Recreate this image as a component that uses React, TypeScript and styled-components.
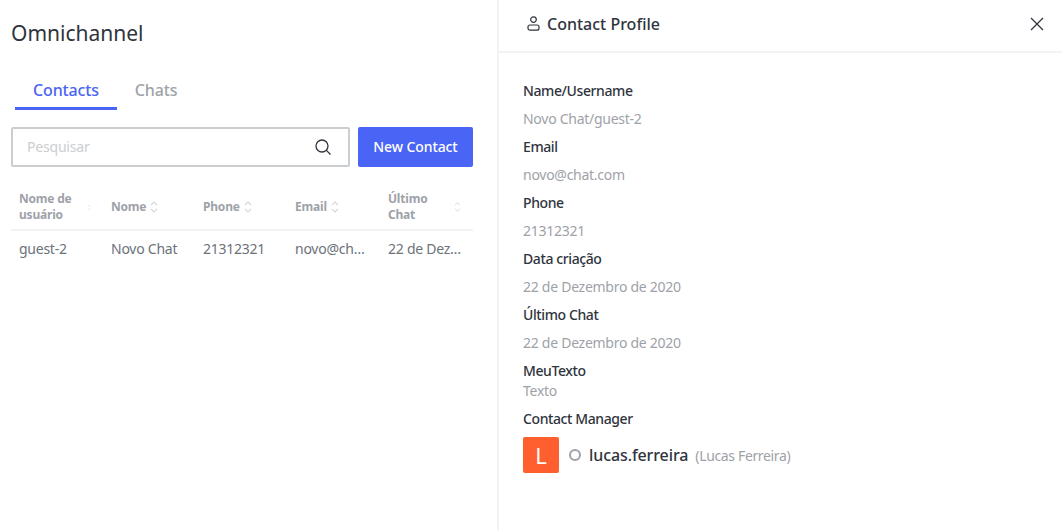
import React from "react";
import styled, { createGlobalStyle } from "styled-components";

const Global = createGlobalStyle`
  html, body { margin: 0; padding: 0; background: #fff; }
  body { font-family: "Noto Sans", "Open Sans", sans-serif; color: #2f343d; }
  * { box-sizing: border-box; }
`;

const Page = styled.div`
  display: flex;
  width: 1062px;
  height: 530px;
  overflow: hidden;
`;
const Left = styled.div`
  width: 497px;
  flex-shrink: 0;
  padding: 0 24px 0 11px;
`;
const Title = styled.h1`
  margin: 0;
  padding-top: 18px;
  height: 71px;
  font-size: 21px;
  line-height: 30px;
  font-weight: 400;
  color: #2f343d;
`;
const Tabs = styled.div`
  display: flex;
  padding-left: 4px;
  height: 39px;
`;
const Tab = styled.div<{ $active?: boolean }>`
  padding: 0 18px;
  height: 39px;
  line-height: 38px;
  font-size: 16px;
  letter-spacing: -0.15px;
  font-weight: 500;
  color: ${(p) => (p.$active ? "#4a64f5" : "#9ea2a8")};
  border-bottom: 3px solid ${(p) => (p.$active ? "#4a64f5" : "transparent")};
`;
const SearchRow = styled.div`
  display: flex;
  gap: 8px;
  margin-top: 17px;
`;
const SearchBox = styled.div`
  flex: 1;
  height: 40px;
  display: flex;
  align-items: center;
  justify-content: space-between;
  padding: 0 17px 0 14px;
  border: 2px solid #cbced1;
  border-radius: 2px;
`;
const SearchInput = styled.input`
  border: 0;
  outline: 0;
  padding: 0 0 2px;
  width: 200px;
  font: 400 14px "Noto Sans", sans-serif;
  letter-spacing: -0.2px;
  &::placeholder { color: #cbced1; opacity: 1; }
`;
const NewButton = styled.button`
  width: 115px;
  height: 40px;
  border: 0;
  border-radius: 2px;
  padding: 0 0 2px;
  background: #4a64f5;
  color: #fff;
  font: 500 14px "Noto Sans", sans-serif;
  letter-spacing: -0.1px;
`;
const Table = styled.table`
  width: 462px;
  margin-top: 18px;
  table-layout: fixed;
  border-collapse: collapse;
`;
const Th = styled.th`
  padding: 0 8px;
  height: 45px;
  border-bottom: 2px solid #f2f3f5;
  text-align: left;
  font-size: 12px;
  line-height: 16px;
  font-weight: 700;
  letter-spacing: -0.2px;
  color: #9ea2a8;
  &:nth-child(-n + 3) { width: 92px; }
`;
const HeadInner = styled.div<{ $spread?: boolean }>`
  display: flex;
  align-items: center;
  gap: 4px;
  justify-content: ${(p) => (p.$spread ? "space-between" : "flex-start")};
  padding-right: ${(p) => (p.$spread ? "4px" : "0")};
`;
const Td = styled.td`
  padding: 0 8px 3px;
  height: 38px;
  font-size: 14px;
  letter-spacing: -0.25px;
  color: #6c727a;
  white-space: nowrap;
  overflow: hidden;
  text-overflow: ellipsis;
`;
const Right = styled.div`
  flex: 1;
  border-left: 2px solid #f2f3f5;
`;
const Header = styled.div`
  height: 53px;
  display: flex;
  align-items: center;
  justify-content: space-between;
  padding: 0 18px 4px 28px;
  border-bottom: 2px solid #f2f3f5;
`;
const HeaderTitle = styled.div`
  display: flex;
  align-items: center;
  gap: 7px;
  font-size: 16px;
  font-weight: 500;
  color: #2f343d;
`;
const Body = styled.div`
  padding: 28px 24px;
`;
const Label = styled.div`
  font-size: 14px;
  line-height: 20px;
  font-weight: 500;
  letter-spacing: -0.4px;
  color: #2f343d;
`;
const Value = styled.div<{ $tight?: boolean }>`
  margin: ${(p) => (p.$tight ? "0" : "8px")} 0 8px;
  font-size: 14px;
  line-height: 20px;
  letter-spacing: -0.27px;
  color: #9ea2a8;
`;
const Manager = styled.div`
  display: flex;
  align-items: center;
  margin-top: 8px;
`;
const Avatar = styled.div`
  width: 36px;
  height: 36px;
  border-radius: 2px;
  background: #ff5f2e;
  color: #fff;
  font-size: 22px;
  line-height: 36px;
  text-align: center;
`;
const Status = styled.span`
  width: 12px;
  height: 12px;
  margin: 0 8px 0 10px;
  border: 2px solid #9ea2a8;
  border-radius: 50%;
`;
const Username = styled.span`
  font-size: 16px;
  font-weight: 500;
  letter-spacing: -0.1px;
  color: #2f343d;
`;
const FullName = styled.span`
  margin-left: 7px;
  font-size: 14px;
  letter-spacing: -0.35px;
  color: #9ea2a8;
`;

const Sort = ({ small }: { small?: boolean }) => (
  <svg
    width={small ? 6 : 8}
    height={small ? 9 : 12}
    viewBox="0 0 8 12"
    fill="none"
    stroke="#d5d7da"
    strokeWidth="1.1"
  >
    <path d="M1 4 4 1 7 4M1 8 4 11 7 8" />
  </svg>
);
const SearchIcon = () => (
  <svg width="16" height="16" viewBox="0 0 16 16" fill="none" stroke="#2f343d" strokeWidth="1.3">
    <circle cx="7" cy="7" r="6" />
    <path d="M11.4 11.4 15.5 15.5" />
  </svg>
);
const UserIcon = () => (
  <svg width="13" height="15" viewBox="0 0 13 15" fill="none" stroke="#2f343d" strokeWidth="1.2">
    <circle cx="6.5" cy="3.6" r="2.8" />
    <rect x="1" y="9" width="11" height="5.2" rx="2" />
  </svg>
);
const CloseIcon = () => (
  <svg width="14" height="14" viewBox="0 0 14 14" fill="none" stroke="#2f343d" strokeWidth="1.3">
    <path d="M1 1 13 13M13 1 1 13" />
  </svg>
);

const columns = [
  { title: "Nome de usuário", spread: true, small: true },
  { title: "Nome" },
  { title: "Phone" },
  { title: "Email" },
  { title: "Último Chat", spread: true },
];
const cells = ["guest-2", "Novo Chat", "21312321", "novo@chat.com", "22 de Dezembro de 2020"];
const fields = [
  { label: "Name/Username", value: "Novo Chat/guest-2" },
  { label: "Email", value: "novo@chat.com" },
  { label: "Phone", value: "21312321" },
  { label: "Data criação", value: "22 de Dezembro de 2020" },
  { label: "Último Chat", value: "22 de Dezembro de 2020" },
  { label: "MeuTexto", value: "Texto", tight: true },
];

export default function App() {
  return (
    <Page>
      <Global />
      <Left>
        <Title>Omnichannel</Title>
        <Tabs>
          <Tab $active>Contacts</Tab>
          <Tab>Chats</Tab>
        </Tabs>
        <SearchRow>
          <SearchBox>
            <SearchInput placeholder="Pesquisar" />
            <SearchIcon />
          </SearchBox>
          <NewButton>New Contact</NewButton>
        </SearchRow>
        <Table>
          <thead>
            <tr>
              {columns.map((c) => (
                <Th key={c.title}>
                  <HeadInner $spread={c.spread}>
                    <span>{c.title}</span>
                    <Sort small={c.small} />
                  </HeadInner>
                </Th>
              ))}
            </tr>
          </thead>
          <tbody>
            <tr>
              {cells.map((c) => (
                <Td key={c}>{c}</Td>
              ))}
            </tr>
          </tbody>
        </Table>
      </Left>
      <Right>
        <Header>
          <HeaderTitle>
            <UserIcon />
            Contact Profile
          </HeaderTitle>
          <CloseIcon />
        </Header>
        <Body>
          {fields.map((f) => (
            <React.Fragment key={f.label}>
              <Label>{f.label}</Label>
              <Value $tight={f.tight}>{f.value}</Value>
            </React.Fragment>
          ))}
          <Label>Contact Manager</Label>
          <Manager>
            <Avatar>L</Avatar>
            <Status />
            <Username>lucas.ferreira</Username>
            <FullName>(Lucas Ferreira)</FullName>
          </Manager>
        </Body>
      </Right>
    </Page>
  );
}
